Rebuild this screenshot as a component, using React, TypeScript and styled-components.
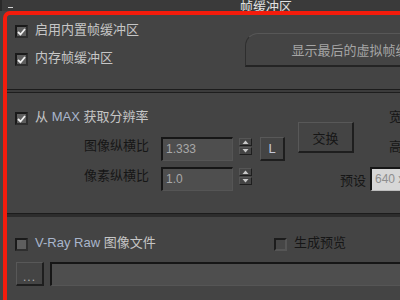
import React from 'react';
import styled, { createGlobalStyle } from 'styled-components';

const Global = createGlobalStyle`
  html, body { margin: 0; padding: 0; background: #444444; overflow: hidden; }
  body { font-family: "Liberation Sans", "Noto Sans CJK SC", sans-serif; }
`;

const Panel = styled.div`
  width: 530px;
  height: 300px;
  display: flex;
  flex-direction: column;
  background: #444444;
`;

const TitleBar = styled.div`
  flex: none;
  height: 11px;
  display: grid;
  grid-template-columns: 1fr auto 1fr;
  background: #3a3a3a;
  border-left: 2px solid #2a2a2a;
  overflow: hidden;
`;

const Dash = styled.span`
  justify-self: start;
  width: 5px;
  height: 1px;
  margin: 7px 0 0 6px;
  background: #d0d0d0;
`;

const Title = styled.span`
  align-self: end;
  font-size: 13px;
  line-height: 13px;
  color: #e2e2e2;
  margin-bottom: -1px;
`;

const Frame = styled.div`
  flex: 1;
  margin-left: 3px;
  border: 4px solid #f41c0c;
  border-right: none;
  border-bottom: none;
  border-top-left-radius: 7px;
  display: flex;
  flex-direction: column;
`;

const Section = styled.div<{ $h: number }>`
  flex: none;
  height: ${(p) => p.$h}px;
  display: flex;
`;

const Separator = styled.div<{ $double?: boolean }>`
  flex: none;
  height: 4px;
  box-sizing: border-box;
  background: ${(p) => (p.$double ? '#3c3c3c' : '#2c2c2c')};
  border-top: 1px solid #1c1c1c;
  border-bottom: 1px solid ${(p) => (p.$double ? '#1e1e1e' : '#2c2c2c')};
`;

const Column = styled.div<{ $w?: number; $pt?: number; $pl?: number }>`
  flex: none;
  width: ${(p) => (p.$w ? `${p.$w}px` : 'auto')};
  padding-top: ${(p) => p.$pt ?? 0}px;
  padding-left: ${(p) => p.$pl ?? 0}px;
  box-sizing: border-box;
  display: flex;
  flex-direction: column;
  align-items: flex-start;
`;

const CheckRow = styled.label<{ $mt?: number; $w?: number }>`
  display: flex;
  align-items: flex-start;
  height: 18px;
  margin-top: ${(p) => p.$mt ?? 0}px;
  width: ${(p) => (p.$w ? `${p.$w}px` : 'auto')};
  flex: none;
`;

const Box = styled.span<{ $disabled?: boolean }>`
  flex: none;
  width: 13px;
  height: 13px;
  box-sizing: border-box;
  margin-top: 4px;
  margin-right: 7px;
  border: 2px solid;
  border-color: ${(p) => (p.$disabled ? '#1c1c1c #555 #555 #1c1c1c' : '#1a1a1a #2e2e2e #2e2e2e #1a1a1a')};
  background: ${(p) => (p.$disabled ? '#464646' : '#5e5e5e')};
  display: flex;
  align-items: center;
  justify-content: center;
`;

const Text = styled.span<{ $dark?: boolean }>`
  font-size: 13px;
  line-height: 18px;
  white-space: nowrap;
  color: ${(p) => (p.$dark ? '#161616' : '#c6c6c6')};
`;

const Latin = styled.span`
  color: #a9b6cc;
`;

const BigButton = styled.div`
  width: 235px;
  height: 34px;
  margin-top: 18px;
  box-sizing: border-box;
  border-top: 1px solid #575757;
  border-left: 1px solid #2e2e2e;
  border-bottom: 2px solid #242424;
  border-top-left-radius: 13px;
  display: flex;
  align-items: center;
  justify-content: center;
  font-size: 13px;
  color: #a6a6a6;
  white-space: nowrap;
`;

const FieldRow = styled.div<{ $mt: number }>`
  display: flex;
  align-items: flex-start;
  margin-top: ${(p) => p.$mt}px;
`;

const FieldLabel = styled.span`
  width: 134px;
  text-align: right;
  font-size: 13px;
  line-height: 18px;
  color: #161616;
`;

const Input = styled.div<{ $w: number; $ml: number; $light?: boolean }>`
  width: ${(p) => p.$w}px;
  height: 24px;
  margin-left: ${(p) => p.$ml}px;
  box-sizing: border-box;
  border-top: 2px solid #161616;
  border-left: 2px solid #161616;
  border-right: 1px solid ${(p) => (p.$light ? '#d6d6d6' : '#555')};
  border-bottom: 1px solid ${(p) => (p.$light ? '#bdbdbd' : '#555')};
  background: ${(p) => (p.$light ? '#d7d7d7' : '#4e4e4e')};
  color: ${(p) => (p.$light ? '#8e8e8e' : '#a8a8a8')};
  font-size: 12px;
  line-height: 16px;
  padding: 2px 0 0 3px;
  white-space: nowrap;
  overflow: hidden;
`;

const Spinner = styled.div`
  flex: none;
  width: 13px;
  margin: 1px 0 0 6px;
  display: flex;
  flex-direction: column;
  gap: 1px;
`;

const SpinHalf = styled.div`
  height: 8px;
  box-sizing: border-box;
  border-top: 1px solid #555;
  border-left: 1px solid #555;
  border-right: 1px solid #1e1e1e;
  border-bottom: 1px solid #1e1e1e;
  display: flex;
  align-items: center;
  justify-content: center;
`;

const Raised = styled.div<{ $w: number; $h: number; $ml?: number; $mt?: number }>`
  flex: none;
  width: ${(p) => p.$w}px;
  height: ${(p) => p.$h}px;
  margin-left: ${(p) => p.$ml ?? 0}px;
  margin-top: ${(p) => p.$mt ?? 0}px;
  box-sizing: border-box;
  border-top: 1px solid #585858;
  border-left: 1px solid #585858;
  border-right: 2px solid #1e1e1e;
  border-bottom: 2px solid #1e1e1e;
  background: #444;
  display: flex;
  align-items: center;
  justify-content: center;
  font-size: 13px;
  white-space: nowrap;
`;

const LText = styled.span`
  color: #c4c8d8;
  font-size: 13px;
`;

const SwapText = styled.span`
  color: #161616;
  font-size: 13px;
`;

const Dots = styled.span`
  color: #b0b0b0;
  font-size: 12px;
  margin-top: 6px;
  letter-spacing: 1px;
`;

const SideLabel = styled.span<{ $mt: number; $ml?: number; $self?: string }>`
  font-size: 13px;
  line-height: 18px;
  color: #161616;
  margin-top: ${(p) => p.$mt}px;
  margin-left: ${(p) => p.$ml ?? 0}px;
  align-self: ${(p) => p.$self ?? 'flex-start'};
`;

const BottomRow = styled.div`
  display: flex;
  align-items: flex-start;
  margin-top: 10px;
  width: 100%;
`;

const Check = () => (
  <svg width="9" height="8" viewBox="0 0 9 8">
    <polyline points="1,4 3.5,6.5 8,1" fill="none" stroke="#f0f0f0" strokeWidth="1.8" />
  </svg>
);

const Arrow = ({ up }: { up?: boolean }) => (
  <svg width="7" height="4" viewBox="0 0 7 4">
    <polygon points={up ? '0.5,4 3.5,0.5 6.5,4' : '0.5,0 3.5,3.5 6.5,0'} fill="#c8c8c8" />
  </svg>
);

const SpinBox = () => (
  <Spinner>
    <SpinHalf><Arrow up /></SpinHalf>
    <SpinHalf><Arrow /></SpinHalf>
  </Spinner>
);

export default function App() {
  return (
    <>
      <Global />
      <Panel>
        <TitleBar>
          <Dash />
          <Title>帧缓冲区</Title>
          <span />
        </TitleBar>
        <Frame>
          <Section $h={74}>
            <Column $w={238} $pt={6} $pl={8}>
              <CheckRow>
                <Box><Check /></Box>
                <Text>启用内置帧缓冲区</Text>
              </CheckRow>
              <CheckRow $mt={10}>
                <Box><Check /></Box>
                <Text>内存帧缓冲区</Text>
              </CheckRow>
            </Column>
            <BigButton>显示最后的虚拟帧缓冲区</BigButton>
          </Section>
          <Separator $double />
          <Section $h={120}>
            <Column $w={283} $pt={15} $pl={8}>
              <CheckRow>
                <Box><Check /></Box>
                <Text>从 <Latin>MAX</Latin> 获取分辨率</Text>
              </CheckRow>
              <FieldRow $mt={11}>
                <FieldLabel>图像纵横比</FieldLabel>
                <Input $w={72} $ml={12}>1.333</Input>
                <SpinBox />
                <Raised $w={25} $h={24} $ml={8}><LText>L</LText></Raised>
              </FieldRow>
              <FieldRow $mt={6}>
                <FieldLabel>像素纵横比</FieldLabel>
                <Input $w={72} $ml={12}>1.0</Input>
                <SpinBox />
              </FieldRow>
            </Column>
            <Column $w={76}>
              <Raised $w={56} $h={31} $ml={8} $mt={29}><SwapText>交换</SwapText></Raised>
              <SideLabel $mt={19} $self="flex-end">预设</SideLabel>
            </Column>
            <Column $pt={15}>
              <SideLabel $mt={0} $ml={23}>宽</SideLabel>
              <SideLabel $mt={12} $ml={23}>高</SideLabel>
              <Input $w={120} $ml={4} $light style={{ marginTop: 11 }}>640 x 480</Input>
            </Column>
          </Section>
          <Separator />
          <Column $pt={17} $pl={8}>
            <CheckRow as="div" style={{ width: 'auto' }}>
              <CheckRow $w={259} as="span">
                <Box />
                <Text><Latin>V-Ray Raw</Latin> 图像文件</Text>
              </CheckRow>
              <CheckRow as="span">
                <Box $disabled />
                <Text $dark>生成预览</Text>
              </CheckRow>
            </CheckRow>
            <BottomRow>
              <Raised $w={28} $h={24} $ml={1}><Dots>...</Dots></Raised>
              <Input $w={400} $ml={6} />
            </BottomRow>
          </Column>
        </Frame>
      </Panel>
    </>
  );
}
